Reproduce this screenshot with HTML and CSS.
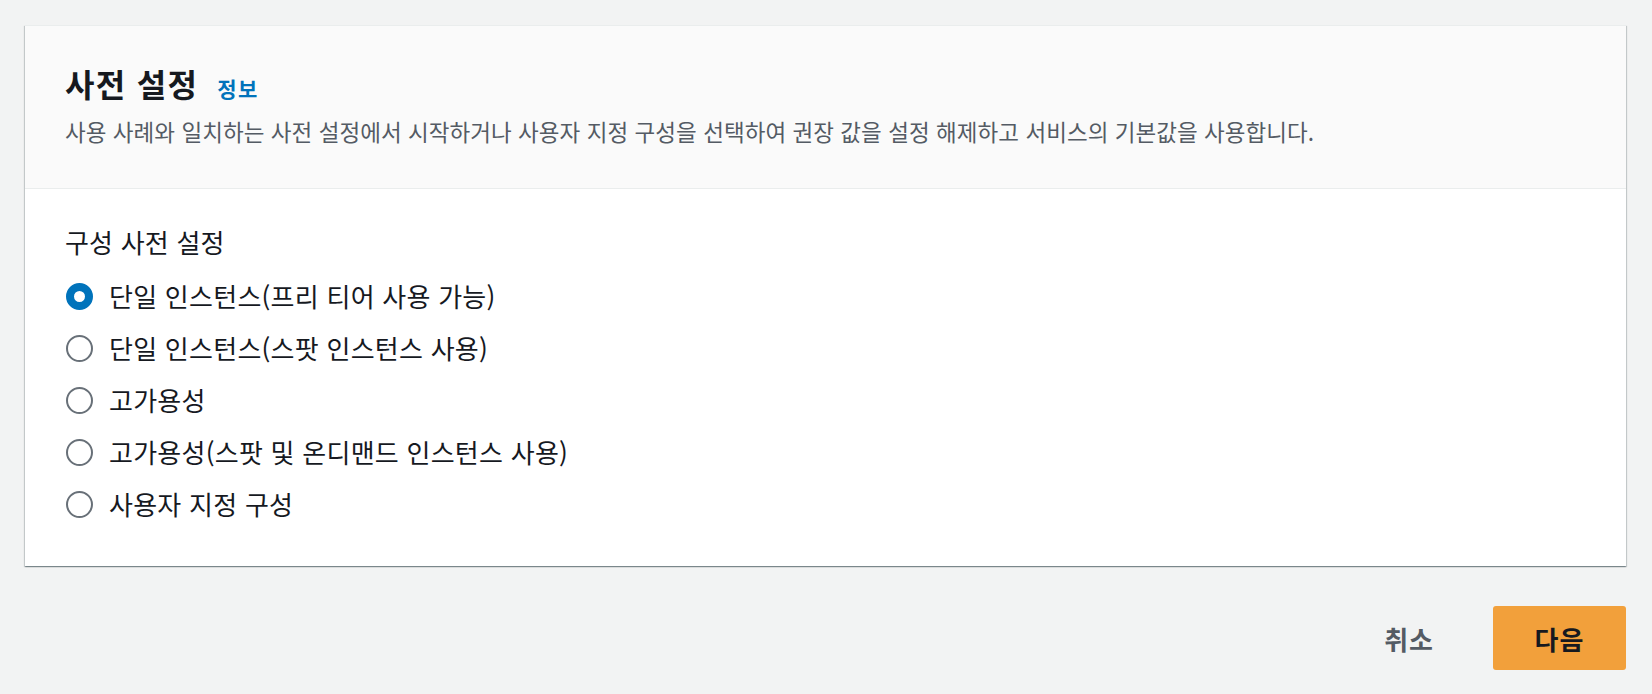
FILE: index.html
```html
<!DOCTYPE html>
<html lang="ko">
<head>
<meta charset="utf-8">
<link rel="stylesheet" href="styles.css">
</head>
<body>
<div class="page">
  <section class="card">
    <header class="card-header">
      <h2 class="title"><span class="title-text">사전 설정</span><a class="info" href="#">정보</a></h2>
      <p class="desc">사용 사례와 일치하는 사전 설정에서 시작하거나 사용자 지정 구성을 선택하여 권장 값을 설정 해제하고 서비스의 기본값을 사용합니다.</p>
    </header>
    <div class="card-body">
      <div class="label">구성 사전 설정</div>
      <div class="options">
        <div class="option"><span class="radio checked"></span><span class="opt-text">단일 인스턴스(프리 티어 사용 가능)</span></div>
        <div class="option"><span class="radio"></span><span class="opt-text">단일 인스턴스(스팟 인스턴스 사용)</span></div>
        <div class="option"><span class="radio"></span><span class="opt-text">고가용성</span></div>
        <div class="option"><span class="radio"></span><span class="opt-text">고가용성(스팟 및 온디맨드 인스턴스 사용)</span></div>
        <div class="option"><span class="radio"></span><span class="opt-text">사용자 지정 구성</span></div>
      </div>
    </div>
  </section>
  <div class="actions">
    <button class="btn-link">취소</button>
    <button class="btn-primary">다음</button>
  </div>
</div>
</body>
</html>
```
FILE: styles.css
```css
html, body {
  margin: 0;
  padding: 0;
  background: #f2f3f3;
  font-family: "Noto Sans CJK KR", "Noto Sans", sans-serif;
  color: #16191f;
}
.page {
  padding: 25px 26px 0 25px;
}
.card {
  background: #fff;
  border-top: 1px solid #eaeded;
  box-shadow: 0 1px 1px 0 rgba(0,28,36,.3), 1px 1px 1px 0 rgba(0,28,36,.15), -1px 1px 1px 0 rgba(0,28,36,.15);
}
.card-header {
  background: #fafafa;
  border-bottom: 1px solid #eaeded;
  padding: 35px 40px 42px 40px;
}
.title {
  margin: 0;
  display: flex;
  align-items: baseline;
  gap: 19px;
  height: 44px;
  font-weight: 700;
  color: #16191f;
}
.title-text {
  font-size: 32px;
  line-height: 44px;
  letter-spacing: 1.3px;
}
.info {
  font-size: 21px;
  line-height: 30px;
  letter-spacing: 1.5px;
  font-weight: 700;
  color: #0073bb;
  text-decoration: none;
}
.desc {
  margin: 11px 0 0 0;
  font-size: 22.5px;
  line-height: 30px;
  letter-spacing: 0.05px;
  color: #545b64;
}
.card-body {
  padding: 38px 40px 36px 40px;
}
.label {
  font-size: 26px;
  line-height: 30px;
  letter-spacing: 0.2px;
  margin-bottom: 13px;
}
.options {
  display: flex;
  flex-direction: column;
}
.option {
  display: flex;
  align-items: center;
  height: 52px;
  gap: 16px;
}
.radio {
  box-sizing: border-box;
  width: 27px;
  height: 27px;
  margin-left: 1px;
  border-radius: 50%;
  border: 2px solid #687078;
  background: #fff;
  flex: none;
}
.radio.checked {
  border: 8px solid #0073bb;
}
.opt-text {
  font-size: 26px;
  line-height: 30px;
  letter-spacing: 0.25px;
}
.actions {
  display: flex;
  justify-content: flex-end;
  align-items: center;
  margin-top: 40px;
  gap: 59px;
}
.btn-link {
  background: none;
  border: none;
  font-family: inherit;
  font-size: 26px;
  font-weight: 700;
  letter-spacing: 1px;
  color: #545b64;
  padding: 0;
  height: 64px;
}
.btn-primary {
  background: #f2a03b;
  border: none;
  border-radius: 3px;
  font-family: inherit;
  font-size: 26px;
  font-weight: 700;
  letter-spacing: 1px;
  color: #16191f;
  width: 133px;
  height: 64px;
}
```
